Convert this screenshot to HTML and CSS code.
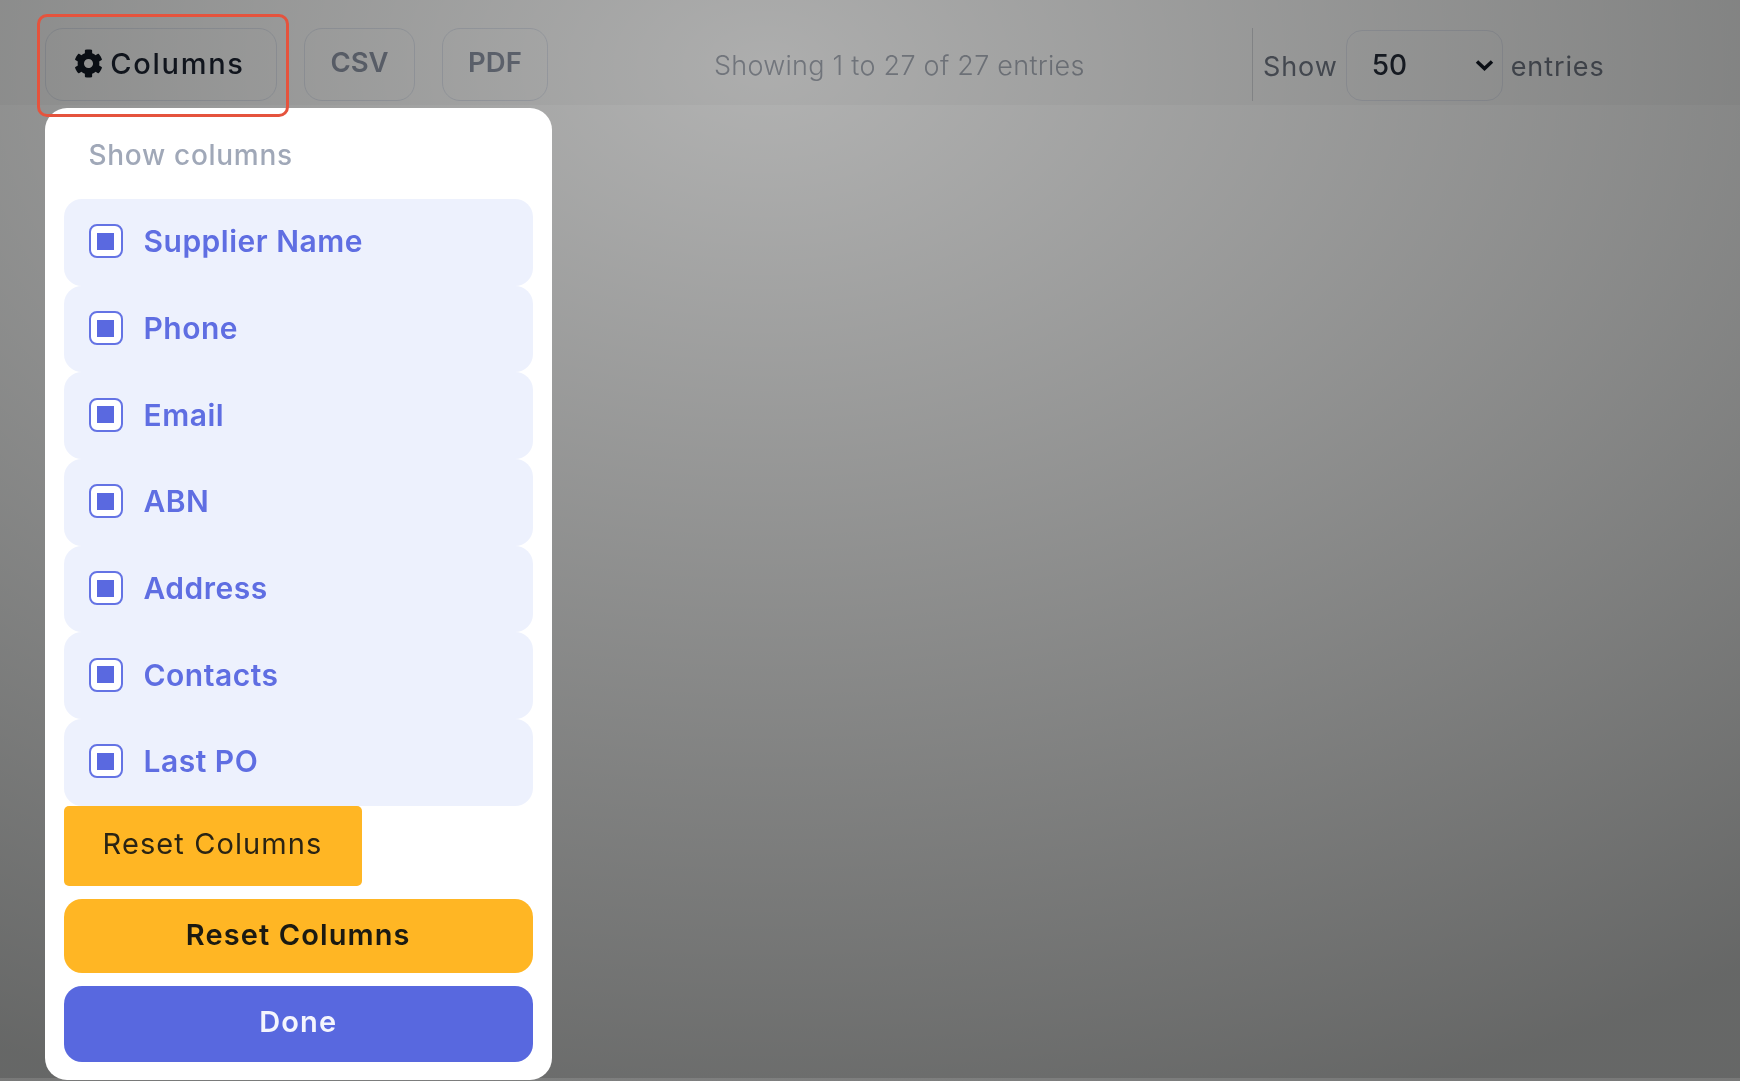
FILE: index.html
```html
<!DOCTYPE html>
<html lang="en">
<head>
<meta charset="utf-8">
<title>Suppliers</title>
<link rel="stylesheet" href="styles.css">
</head>
<body>
<div class="page">
  <header class="toolbar">
    <button class="tool-btn tool-btn-columns" type="button">
      <svg class="gear" viewBox="0 0 512 512" aria-hidden="true"><path d="M487.4 315.7l-42.600-24.600c4.300-23.200 4.300-47 0-70.200l42.600-24.600c4.900-2.800 7.100-8.600 5.500-14-11.100-35.600-30-67.800-54.700-94.600-3.800-4.100-10-5.100-14.800-2.300L380.800 110c-17.900-15.400-38.500-27.300-60.800-35.100V25.800c0-5.600-3.900-10.500-9.400-11.700-36.700-8.200-74.300-7.800-109.200 0-5.500 1.200-9.400 6.100-9.400 11.700V75c-22.200 7.900-42.800 19.800-60.800 35.100L88.700 85.500c-4.900-2.800-11-1.900-14.800 2.300-24.700 26.700-43.600 58.900-54.700 94.600-1.700 5.400.6 11.200 5.500 14L67.300 221c-4.300 23.200-4.300 47 0 70.200l-42.600 24.600c-4.900 2.800-7.100 8.600-5.500 14 11.100 35.600 30 67.800 54.700 94.600 3.800 4.100 10 5.100 14.800 2.300l42.600-24.600c17.900 15.400 38.500 27.300 60.800 35.100v49.200c0 5.600 3.900 10.500 9.400 11.700 36.700 8.200 74.300 7.800 109.200 0 5.500-1.200 9.400-6.100 9.400-11.700v-49.200c22.200-7.900 42.800-19.800 60.800-35.100l42.600 24.600c4.900 2.800 11 1.900 14.800-2.300 24.700-26.700 43.600-58.900 54.700-94.600 1.500-5.500-.7-11.300-5.600-14.100zM256 336c-44.100 0-80-35.900-80-80s35.900-80 80-80 80 35.900 80 80-35.900 80-80 80z"/></svg>
      <span>Columns</span>
    </button>
    <button class="tool-btn tool-btn-csv" type="button">CSV</button>
    <button class="tool-btn tool-btn-pdf" type="button">PDF</button>
    <p class="info">Showing 1 to 27 of 27 entries</p>
    <div class="length">
      <span class="length-label">Show</span>
      <div class="select"><span>50</span>
        <svg class="chevron" viewBox="0 0 19 12" aria-hidden="true"><path d="M2 2.500l7.500 7 7.500-7"/></svg>
      </div>
      <span class="length-label">entries</span>
    </div>
  </header>
</div>

<div class="overlay"></div>

<section class="panel">
  <h2 class="panel-title">Show columns</h2>
  <ul class="col-list">
    <li class="col-item"><span class="check"><i></i></span>Supplier Name</li>
    <li class="col-item"><span class="check"><i></i></span>Phone</li>
    <li class="col-item"><span class="check"><i></i></span>Email</li>
    <li class="col-item"><span class="check"><i></i></span>ABN</li>
    <li class="col-item"><span class="check"><i></i></span>Address</li>
    <li class="col-item"><span class="check"><i></i></span>Contacts</li>
    <li class="col-item"><span class="check"><i></i></span>Last PO</li>
  </ul>
  <button class="reset-plain" type="button">Reset Columns</button>
  <button class="action action-reset" type="button">Reset Columns</button>
  <button class="action action-done" type="button">Done</button>
</section>

<div class="highlight"></div>
</body>
</html>
```
FILE: styles.css
```css
* { box-sizing: border-box; }
html, body { margin: 0; height: 100%; }
body {
  width: 1740px;
  height: 1081px;
  overflow: hidden;
  background: #fff;
  font-family: Inter, "Noto Sans", sans-serif;
  position: relative;
}
.page { height: 100%; filter: blur(0.7px); }
.toolbar {
  height: 107px;
  display: flex;
  align-items: flex-start;
  padding: 28px 0 0 45px;
  border-bottom: 2px solid #ffffff;
  background: #f8f8f8;
}
.tool-btn {
  height: 73px;
  border: 1.5px solid #dfe3ec;
  border-radius: 18px;
  background: transparent;
  font: 600 27.500px Inter, sans-serif;
  padding: 0 0 5px;
  color: #8b92a2;
}
.tool-btn-columns {
  width: 232px;
  display: flex;
  align-items: center;
  justify-content: center;
  gap: 7px;
  padding: 0 3px 2px 0;
  font-weight: 500;
  letter-spacing: 1.700px;
  font-size: 29px;
  color: #1c2230;
}
.gear { width: 29px; height: 29px; fill: #111722; }
.tool-btn-csv { width: 111px; margin-left: 27px; }
.tool-btn-pdf { width: 106px; margin-left: 27px; }
.info {
  margin: 21px 0 0 166px;
  font-size: 27px;
  font-weight: 300;
  color: #a3a8b2;
  white-space: nowrap;
  letter-spacing: 0.260px;
  width: 372px;
}
.length {
  margin-left: 166px;
  height: 73px;
  border-left: 1.500px solid #d2d4d8;
  padding-left: 10px;
  display: flex;
  align-items: center;
  gap: 8px;
  font-size: 27px;
  font-weight: 400;
  color: #6f7582;
  letter-spacing: 0.900px;
}
.length-label { padding-top: 3px; }
.select {
  width: 157px;
  height: 71px;
  margin-top: 2px;
  border: 1.5px solid #e2e5ee;
  border-radius: 16px;
  display: flex;
  align-items: center;
  justify-content: space-between;
  padding: 0 8px 2px 25px;
  font-size: 28px;
  font-weight: 500;
  letter-spacing: 0;
  color: #252b38;
}
.chevron { width: 19px; height: 12px; fill: none; stroke: #111722; stroke-width: 3.500; }
.overlay {
  position: absolute;
  inset: 0;
  background:
    linear-gradient(to bottom, transparent calc(100% - 3px), rgba(255,255,255,0.12) 0),
    radial-gradient(1700px 1100px at 44% 6%, rgba(0,2,1,0.3) 0%, rgba(0,2,1,0.6) 100%);
}
.panel {
  position: absolute;
  left: 44.500px;
  top: 108px;
  width: 507.500px;
  height: 972px;
  background: #fff;
  border-radius: 22px;
  padding: 0 19px;
  filter: blur(0.7px);
}
.panel-title {
  margin: 0;
  height: 91px;
  padding: 31px 0 0 25px;
  font-size: 28px;
  line-height: 32px;
  font-weight: 500;
  letter-spacing: 0.700px;
  color: #a0a8b8;
}
.col-list { list-style: none; margin: 0; padding: 0; }
.col-item {
  height: 86.700px;
  background: #edf1fd;
  border-radius: 18px;
  padding: 0 0 2px 25px;
  display: flex;
  align-items: center;
  gap: 21px;
  font-size: 30px;
  font-weight: 600;
  letter-spacing: 0.500px;
  color: #5f6ee2;
}
.check {
  width: 34px;
  height: 34px;
  border: 2px solid #6473e4;
  border-radius: 8px;
  background: #fff;
  display: flex;
  align-items: center;
  justify-content: center;
}
.check i { width: 17px; height: 17px; background: #5a69e0; }
.reset-plain {
  display: block;
  width: 298px;
  height: 80px;
  border: 0;
  border-radius: 5px;
  background: #ffb624;
  font: 400 29px Inter, sans-serif;
  letter-spacing: 1.100px;
  color: #2a2414;
  padding: 0 0 4px;
}
.action {
  display: block;
  width: 100%;
  border: 0;
  border-radius: 18px;
  font: 600 29px Inter, sans-serif;
  letter-spacing: 1.100px;
  padding: 0 0 3px;
}
.action-reset {
  margin-top: 13px;
  height: 74px;
  background: #ffb624;
  color: #1b1a12;
}
.action-done {
  margin-top: 13px;
  height: 76px;
  background: #5868df;
  color: #f4f5fd;
  padding-bottom: 4px;
}
.highlight {
  position: absolute;
  left: 37px;
  top: 14px;
  width: 252px;
  height: 103px;
  border: 3px solid #e5533d;
  border-radius: 10px;
}
```
